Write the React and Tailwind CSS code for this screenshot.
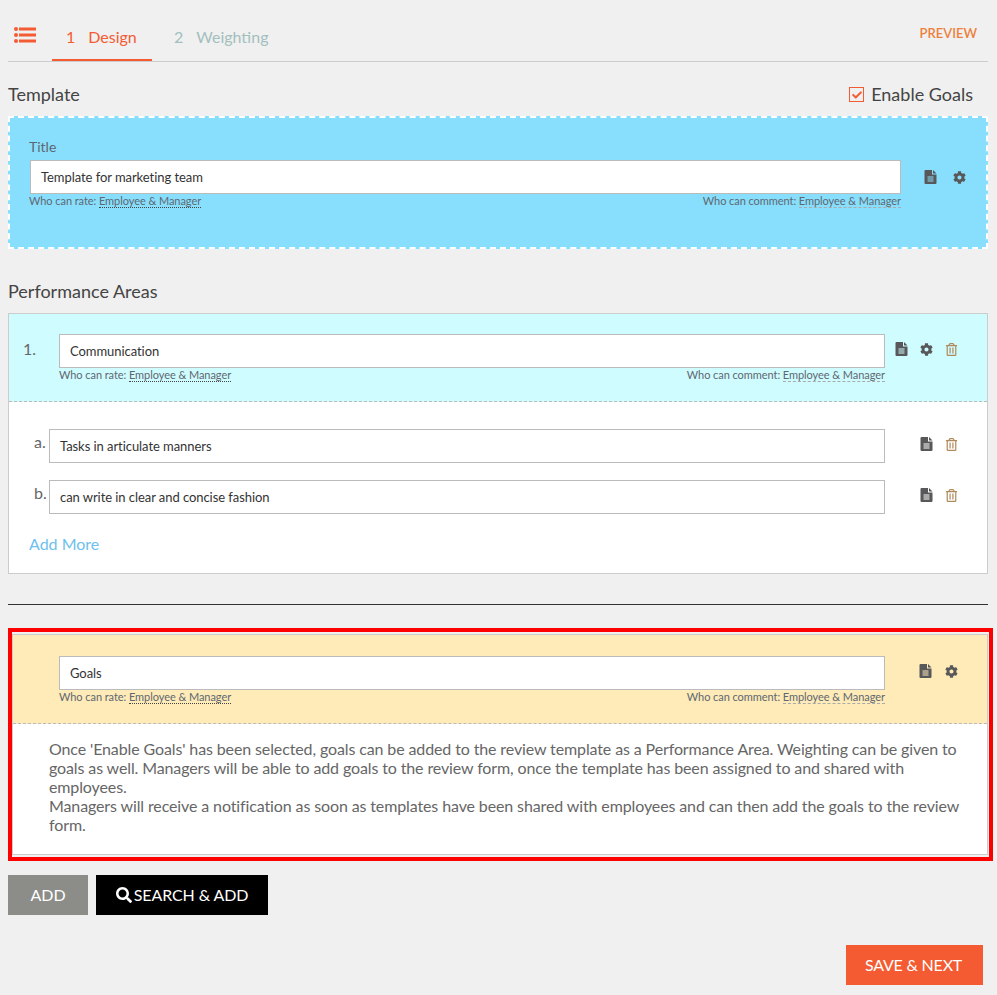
import React from 'react';
import { FaCog, FaRegTrashAlt, FaSearch, FaCheck } from 'react-icons/fa';

function Who({ className = '' }) {
  return (
    <div className={`flex justify-between text-[11px] leading-[14px] tracking-[-0.06px] text-[#5f6770] ${className}`}>
      <span>Who can rate: <span className="border-b border-dotted border-[#444]">Employee &amp; Manager</span></span>
      <span>Who can comment: <span className="border-b border-dashed border-[#aaa]">Employee &amp; Manager</span></span>
    </div>
  );
}

function Field({ value, className = '' }) {
  return (
    <div className={`h-[34px] bg-white border border-[#bbb] pl-[10px] pt-[2px] flex items-center text-[13px] tracking-[-0.06px] text-[#333] ${className}`}>
      {value}
    </div>
  );
}

const ListIcon = () => (
  <svg width="22" height="16" viewBox="0 0 22 16" className="ml-[6px] mt-[27px] fill-[#f45b32]">
    <circle cx="2" cy="2" r="2" />
    <circle cx="2" cy="8" r="2" />
    <circle cx="2" cy="14" r="2" />
    <rect x="5" y="0.5" width="17" height="3" />
    <rect x="5" y="6.5" width="17" height="3" />
    <rect x="5" y="12.5" width="17" height="3" />
  </svg>
);

const Doc = () => (
  <svg width="13" height="14" viewBox="0 0 12 14" className="fill-[#58585a]">
    <path
      fillRule="evenodd"
      d="M1 0H7.5V4.5H12V13a1 1 0 0 1-1 1H1a1 1 0 0 1-1-1V1a1 1 0 0 1 1-1zM3 6.5V7.5H9V6.5zM3 8.5V9.5H9V8.5zM3 10.5V11.5H9V10.5z"
    />
    <path d="M8.5 0L12 3.5H8.5z" />
  </svg>
);
const Gear = () => <FaCog className="text-[13px] text-[#58585a]" />;
const Trash = () => <FaRegTrashAlt className="text-[13px] text-[#b08a5e]" />;

function SubRow({ label, value, className = '' }) {
  return (
    <div className={`flex items-start ${className}`}>
      <span className="w-10 pl-[25px] text-[16px] leading-[26px] text-[#666]">{label}</span>
      <Field value={value} className="w-[836px]" />
      <div className="flex items-center gap-3 pl-[35px] h-[30px]">
        <Doc />
        <Trash />
      </div>
    </div>
  );
}

export default function App() {
  return (
    <div className="min-h-[995px] bg-[#f0f0f0] font-['Lato','Liberation_Sans',sans-serif] text-[#444]">
      <div className="ml-2 w-[980px]">
        <div className="h-[62px] border-b border-[#ccc] flex items-start">
          <ListIcon />
          <div className="ml-4 w-[100px] h-[61px] border-b-2 border-[#f45b32] pt-[27px] pl-[14px] text-[16px] leading-[20px] text-[#f45b32]">
            1<span className="ml-[13px]">Design</span>
          </div>
          <div className="ml-[22px] pt-[27px] text-[16px] leading-[20px] text-[#a3bfbd]">
            2<span className="ml-[13px]">Weighting</span>
          </div>
          <div className="ml-auto mr-[11px] pt-[25px] text-[13px] leading-[17px] font-semibold text-[#ee7f3c]">PREVIEW</div>
        </div>

        <div className="flex items-center justify-between h-[54px] pt-[10px] pr-[15px]">
          <span className="text-[18px] text-[#444]">Template</span>
          <label className="flex items-center gap-[7px] text-[18px] mt-[1px]">
            <span className="w-[15px] h-[15px] border border-[#f45b32] flex items-center justify-center">
              <FaCheck className="text-[10px] text-[#f45b32]" />
            </span>
            Enable Goals
          </label>
        </div>

        <div className="h-[133px] bg-[#87dffd] border-2 border-dashed border-white pt-[19px] pl-[19px]">
          <div className="text-[14px] leading-[20px] text-[#5f6770]">Title</div>
          <div className="flex items-start mt-[3px]">
            <div className="w-[871px] ml-[1px]">
              <Field value="Template for marketing team" />
            </div>
            <div className="flex items-center gap-4 pl-[23px] h-[34px]">
              <Doc />
              <Gear />
            </div>
          </div>
          <Who className="w-[872px]" />
        </div>

        <div className="mt-[31px] h-[33px] text-[18px] leading-[22px] text-[#444]">Performance Areas</div>

        <div className="h-[261px] border border-[#ccc] bg-white">
          <div className="h-[88px] bg-[#cffcff] border-b border-dashed border-[#bbb] pt-5 flex items-start">
            <span className="w-[50px] pl-[14px] text-[16px] leading-[30px] text-[#666]">1.</span>
            <div className="w-[826px]">
              <Field value="Communication" />
              <Who />
            </div>
            <div className="flex items-center gap-3 pl-[10px] h-[30px]">
              <Doc />
              <Gear />
              <Trash />
            </div>
          </div>
          <SubRow label="a." value="Tasks in articulate manners" className="mt-[27px]" />
          <SubRow label="b." value="can write in clear and concise fashion" className="mt-[17px]" />
          <div className="mt-[20px] pl-5 text-[16px] leading-[20px] text-[#6ec1ec]">Add More</div>
        </div>

        <div className="mt-[30px] border-t border-[#333]" />

        <div className="mt-[23px] w-[985px] h-[233px] border-4 border-[#f00] pt-[2px] box-border">
          <div className="w-[976px] h-[221px] border border-[#ccc] bg-white">
            <div className="h-[89px] bg-[#feebb8] border-b border-dashed border-[#bbb] pt-[21px] pl-[46px] flex items-start">
              <div className="w-[826px]">
                <Field value="Goals" />
                <Who />
              </div>
              <div className="flex items-center gap-[13px] pl-[34px] h-[30px]">
                <Doc />
                <Gear />
              </div>
            </div>
            <div className="pt-[15px] pl-9 pr-[14px] text-[16px] leading-[19px] tracking-[-0.12px] text-[#666]">
              Once 'Enable Goals' has been selected, goals can be added to the review template as a Performance Area. Weighting can be given to goals as well. Managers will be able to add goals to the review form, once the template has been assigned to and shared with employees.
              <br />
              Managers will receive a notification as soon as templates have been shared with employees and can then add the goals to the review form.
            </div>
          </div>
        </div>

        <div className="mt-[14px] flex gap-2">
          <button className="w-20 h-10 bg-[#8c8d89] text-white text-[16px]">ADD</button>
          <button className="w-[172px] h-10 bg-black text-white text-[16px] tracking-[-0.1px] flex items-center justify-center gap-[2px]">
            <FaSearch className="text-[16px]" />
            SEARCH &amp; ADD
          </button>
        </div>

        <div className="mt-[30px] flex justify-end pr-[5px]">
          <button className="w-[137px] h-10 bg-[#f45b32] text-white text-[16px] tracking-[-0.2px] pr-[2px]">SAVE &amp; NEXT</button>
        </div>
      </div>
    </div>
  );
}
